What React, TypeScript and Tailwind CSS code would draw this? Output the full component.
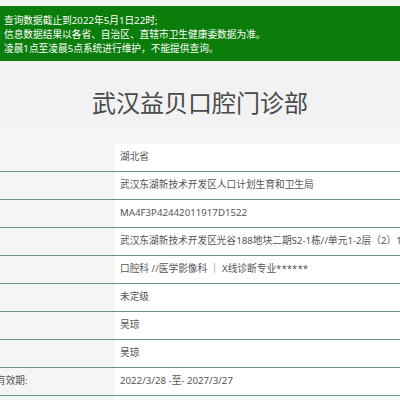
const rows: { label?: string; value: string }[] = [
  { value: "湖北省" },
  { value: "武汉东湖新技术开发区人口计划生育和卫生局" },
  { value: "MA4F3P42442011917D1522" },
  { value: "武汉东湖新技术开发区光谷188地块二期S2-1栋//单元1-2层（2）1号" },
  { value: "口腔科 //医学影像科 ｜ X线诊断专业******" },
  { value: "未定级" },
  { value: "吴琼" },
  { value: "吴琼" },
  { label: "有效期:", value: "2022/3/28 -至- 2027/3/27" },
];

export default function App() {
  return (
    <div
      className="w-[400px] h-[400px] overflow-hidden bg-[#f5f5f5] pt-[6px]"
      style={{ fontFamily: '"Noto Sans", "Noto Sans CJK SC", sans-serif' }}
    >
      <div className="bg-[#0b7d0b] text-white text-[9.7px] leading-[14px] pl-[4px] pt-[8px] pb-[5px]">
        <p>查询数据截止到2022年5月1日22时;</p>
        <p>信息数据结果以各省、自治区、直辖市卫生健康委数据为准。</p>
        <p>凌晨1点至凌晨5点系统进行维护，不能提供查询。</p>
      </div>

      <div className="bg-[#f2f2f2] text-center text-[24px] leading-[36px] text-[#4a4a4a] pt-[24px] pb-[8px]">
        武汉益贝口腔门诊部
      </div>

      <div className="mt-[15px]">
        {rows.map((row, i) => (
          <div key={i} className="flex h-[28px] border-b border-[#6a9686]">
            <div className="w-[115px] shrink-0 flex items-center overflow-hidden">
              {row.label && (
                <span className="ml-[-4px] text-[9.7px] text-[#555] whitespace-nowrap">
                  {row.label}
                </span>
              )}
            </div>
            <div className="flex-1 bg-white flex items-center pl-[5px] overflow-hidden">
              <span className="text-[9.7px] text-[#555] whitespace-nowrap">
                {row.value}
              </span>
            </div>
          </div>
        ))}
        <div className="flex h-[28px]">
          <div className="w-[115px] shrink-0 bg-[#f2f7f5]" />
          <div className="flex-1 bg-[#f6fbf9]" />
        </div>
      </div>
    </div>
  );
}
